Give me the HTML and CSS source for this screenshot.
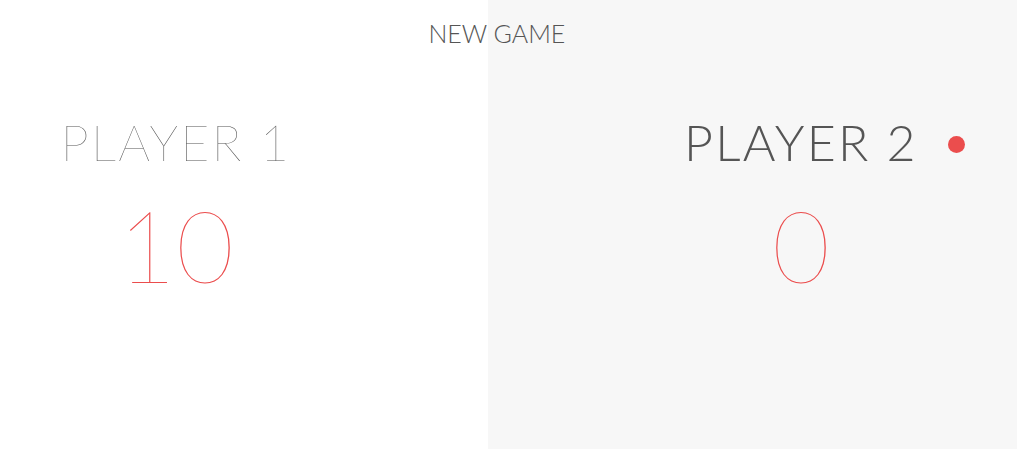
FILE: index.html
```html
<!DOCTYPE html>
<html lang="en">
<head>
<meta charset="utf-8">
<title>Pig Game</title>
<link rel="stylesheet" href="styles.css">
</head>
<body>
<div class="wrapper">
  <div class="panel">
    <div class="player-name">Player 1</div>
    <div class="player-score">10</div>
  </div>
  <div class="panel active">
    <div class="player-name">Player 2</div>
    <div class="player-score">0</div>
  </div>
  <button class="btn-new"><i class="btn-icon"></i>New game</button>
</div>
</body>
</html>
```

FILE: styles.css
```css
* {
  margin: 0;
  padding: 0;
  box-sizing: border-box;
}

html, body {
  width: 100%;
  height: 100%;
  overflow: hidden;
  background: #fff;
}

body {
  font-family: Lato, "Open Sans", sans-serif;
  color: #555;
}

.wrapper {
  position: relative;
  display: flex;
  width: 1250px;
  height: 449px;
  margin-left: -137.5px;
}

.panel {
  width: 625px;
  height: 100%;
  display: flex;
  flex-direction: column;
  align-items: center;
  padding: 111.5px 124px 0 126px;
  background: #fff;
}

.panel.active {
  background: #f7f7f7;
}

.player-name {
  position: relative;
  width: 100%;
  text-align: center;
  font-size: 50px;
  line-height: 60px;
  letter-spacing: 2.3px;
  font-weight: 100;
  text-transform: uppercase;
  margin-bottom: 12.5px;
}

.active .player-name {
  font-weight: 300;
}

.active .player-name::after {
  content: "";
  position: absolute;
  width: 17px;
  height: 17px;
  border-radius: 50%;
  background: #EB4D4D;
  top: 24px;
  right: 24px;
}

.player-score {
  text-align: center;
  font-size: 100px;
  line-height: 120px;
  font-weight: 100;
  color: #EB4D4D;
}

.btn-new {
  position: absolute;
  top: 18px;
  left: 50%;
  width: 250px;
  transform: translateX(-50%);
  background: none;
  border: none;
  color: #555;
  font-family: Lato, "Open Sans", sans-serif;
  font-size: 25px;
  line-height: 30px;
  font-weight: 300;
  text-transform: uppercase;
}

.btn-icon {
  display: inline-block;
  margin-right: 18.75px;
}
```
